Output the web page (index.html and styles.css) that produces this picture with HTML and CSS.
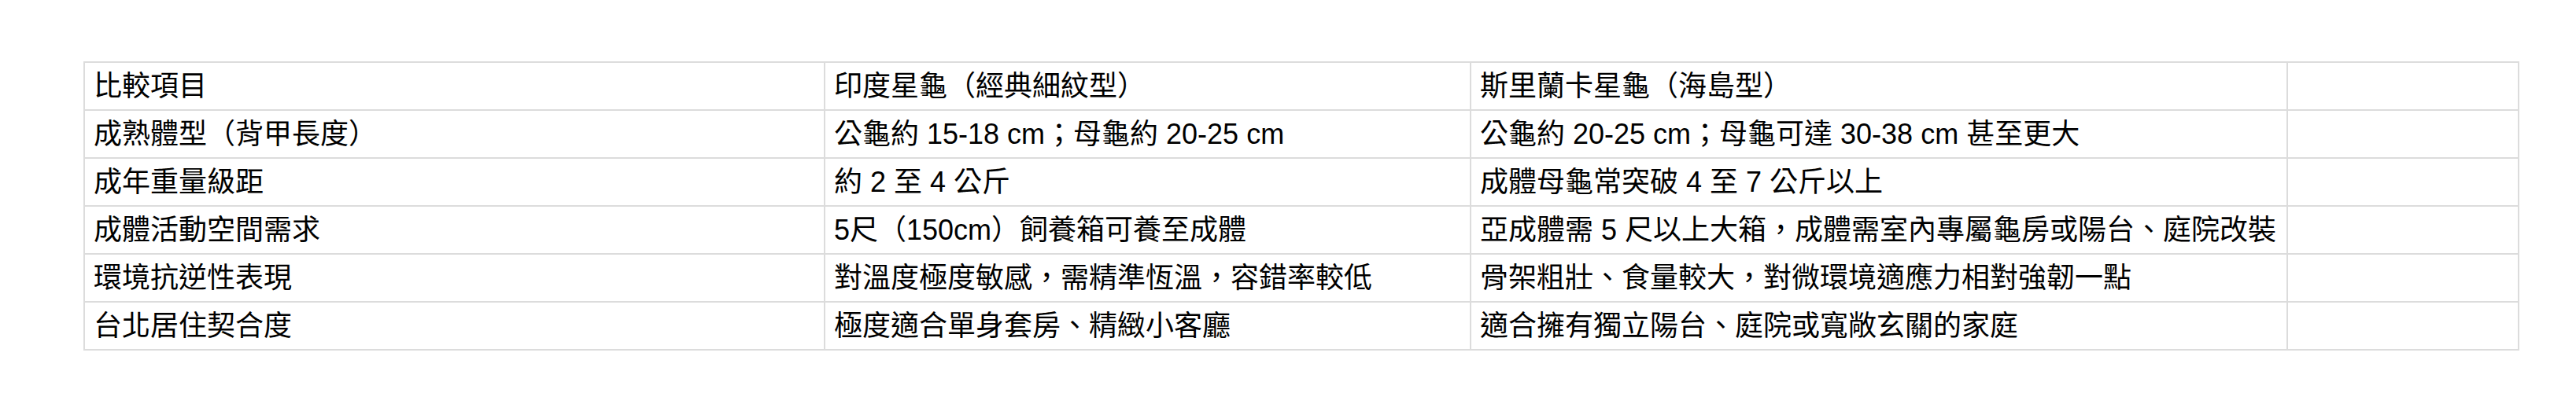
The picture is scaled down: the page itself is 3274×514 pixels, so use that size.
FILE: index.html
```html
<!DOCTYPE html>
<html lang="zh-Hant">
<head>
<meta charset="utf-8">
<title>星龜比較</title>
<link rel="stylesheet" href="styles.css">
</head>
<body>
<main class="page">
  <table class="compare">
    <colgroup>
      <col class="c1"><col class="c2"><col class="c3"><col class="c4">
    </colgroup>
    <tbody>
      <tr><td>比較項目</td><td>印度星龜（經典細紋型）</td><td>斯里蘭卡星龜（海島型）</td><td></td></tr>
      <tr><td>成熟體型（背甲長度）</td><td>公龜約 15-18 cm；母龜約 20-25 cm</td><td>公龜約 20-25 cm；母龜可達 30-38 cm 甚至更大</td><td></td></tr>
      <tr><td>成年重量級距</td><td>約 2 至 4 公斤</td><td>成體母龜常突破 4 至 7 公斤以上</td><td></td></tr>
      <tr><td>成體活動空間需求</td><td>5尺（150cm）飼養箱可養至成體</td><td>亞成體需 5 尺以上大箱，成體需室內專屬龜房或陽台、庭院改裝</td><td></td></tr>
      <tr><td>環境抗逆性表現</td><td>對溫度極度敏感，需精準恆溫，容錯率較低</td><td>骨架粗壯、食量較大，對微環境適應力相對強韌一點</td><td></td></tr>
      <tr><td>台北居住契合度</td><td>極度適合單身套房、精緻小客廳</td><td>適合擁有獨立陽台、庭院或寬敞玄關的家庭</td><td></td></tr>
    </tbody>
  </table>
</main>
</body>
</html>
```
FILE: styles.css
```css
html, body {
  margin: 0;
  padding: 0;
  background: #ffffff;
}

.page {
  padding: 78px 75px 0 106px;
}

.compare {
  border-collapse: collapse;
  width: 3094px;
  table-layout: fixed;
  font-family: "Liberation Sans", "Noto Sans CJK SC", sans-serif;
  font-size: 36px;
  color: #000000;
}

.c1 { width: 941px; }
.c2 { width: 821px; }
.c3 { width: 1038px; }
.c4 { width: 294px; }

.compare td {
  border: 2px solid #dcdcdc;
  padding: 9px 11px 8px 11px;
  line-height: 42px;
  white-space: nowrap;
  vertical-align: middle;
  text-align: left;
}
```
